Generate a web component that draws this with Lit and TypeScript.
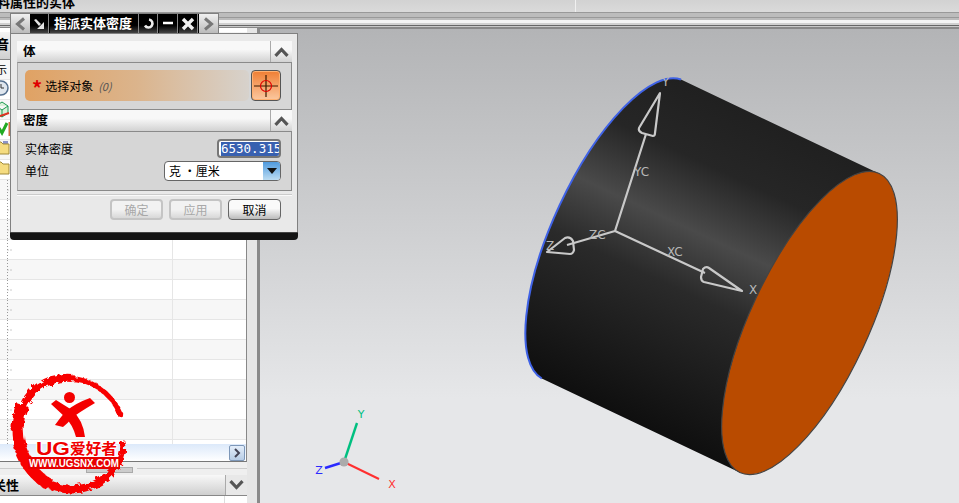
import { LitElement, html, css, svg } from "lit";
import { customElement } from "lit/decorators.js";

const chev = (up: boolean, c = "#555") => html`<svg width="15" height="10" viewBox="0 0 15 10"><path d=${up ? "M1.5 8.8 7.5 2.5l6 6.3" : "M1.5 1.2 7.5 7.5l6-6.3"} fill="none" stroke=${c} stroke-width="3.2"/></svg>`;

const folder = svg`<path d="M-4 2h5l2 2h6v10h-13z" fill="#f5dc80" stroke="#a08a3a"/>`;

@customElement("app-root")
export class AppRoot extends LitElement {
  static styles = css`
    :host { display: block; width: 959px; height: 503px; overflow: hidden; position: relative; background: #e4e4e4;
      font-family: "Noto Sans CJK SC", "Liberation Sans", sans-serif; font-size: 12px; color: #000; }
    * { box-sizing: border-box; }
    .app { display: flex; flex-direction: column; height: 503px; }
    .top { height: 12px; flex: none; display: flex; background: linear-gradient(#d2d2d2, #dadada); overflow: hidden; }
    .top .cell { width: 576px; border-right: 1px solid #f0f0f0; padding-left: 0; }
    .top b { display: block; margin: -7px 0 0 -3px; font-size: 13px; line-height: 18px; font-weight: 700; white-space: nowrap; }
    .ribbon { height: 16px; flex: none; background: linear-gradient(#999 0 1px, #bcbcbc 1px 5px, #999 5px 6px, #bbb 6px 8px, #f4f4f4 8px 11px, #d0d0d0 11px 13px, #666 13px 14px, #c8c8c8 14px 15px, #888 15px 16px); }
    .main { flex: 1; display: flex; min-height: 0; }
    .left { width: 247px; flex: none; display: flex; flex-direction: column; background: #fff; }
    .phead { height: 28px; flex: none; margin-top: 4px; background: linear-gradient(#f4f4f4, #d0d0d0); border-bottom: 1px solid #888; padding-top: 3px; }
    .phead b { display: block; margin-left: -4px; font-size: 13px; line-height: 17px; }
    .tree { height: 384px; flex: none; display: flex; flex-direction: column; overflow: hidden; border-right: 1px solid #888; }
    .row { height: 20px; flex: none; display: flex; border-bottom: 1px solid #e6e6e6; background: #fff; }
    .row.alt { background: #f7f7f7; }
    .row .a { width: 173px; border-right: 1px solid #e6e6e6; overflow: hidden; }
    .row svg { display: block; }
    .row .t { font-size: 11px; line-height: 19px; margin-left: -4px; }
    .hscroll { height: 18px; flex: none; display: flex; border-right: 1px solid #888; border-bottom: 1px solid #777;
      background: linear-gradient(#dce9fa, #fff); padding: 1px 1px 0 0; justify-content: flex-end; }
    .sbtn { width: 16px; height: 16px; border: 1px solid #7d97b8; border-radius: 2px; background: linear-gradient(#e4eefa, #b8cde6); display: flex; align-items: center; justify-content: center; }
    .sash { height: 13px; flex: none; display: flex; align-items: center; background: #efefef; }
    .sash i { display: block; height: 1px; flex: 1; background: #ccc; }
    .sash u { display: block; width: 47px; height: 6px; margin: 3px 4px 0 4px; background: #ccc; border: 1px solid #aaa; }
    .sash .l { flex: none; width: 82px; }
    .phead2 { height: 21px; flex: none; display: flex; background: linear-gradient(#f8f8f8, #cfcfcf); border-bottom: 1px solid #888; }
    .phead2 span { flex: 1; overflow: hidden; }
    .phead2 b { display: block; margin-left: -7px; font-size: 13px; line-height: 20px; }
    .phead2 div { width: 22px; border-left: 1px solid #aaa; display: flex; align-items: center; justify-content: center; background: #e8e8e8; }
    .rest2 { flex: 1; display: flex; justify-content: flex-end; background: #fff; }
    .rest2 i { display: block; width: 1px; margin-right: 22px; background: #ddd; }
    .gap { width: 10px; flex: none; background: #e6e6e6; }
    .bar { width: 3px; flex: none; background: #8a8a8a; }
    .view { flex: 1; min-width: 0; background: linear-gradient(#b3b4b6 0%, #e6e7e9 78%); border-top: 1px solid #888; }
    .view svg { display: block; }
    .view text { font-family: "DejaVu Sans", sans-serif; }

    .dlg { position: absolute; left: 10px; top: 13px; width: 288px; display: flex; flex-direction: column; }
    .strip { width: 209px; height: 20px; display: flex; background: #000; border: 1px solid #808080; border-bottom: none; }
    .strip .nav { width: 19px; flex: none; background: linear-gradient(#f0f0f0, #bbb); display: flex; align-items: center; justify-content: center; }
    .strip .ic { width: 19px; flex: none; margin-right: 1px; background: linear-gradient(#000 60%, #444); border-right: 1px solid #888; display: flex; align-items: center; justify-content: center; }
    .strip .title { flex: 1; background: linear-gradient(#000 60%, #444); border-right: 1px solid #888; color: #fff; font-weight: 700; font-size: 13px; line-height: 18px; padding-left: 4px; white-space: nowrap; overflow: hidden; }
    .body { height: 199px; background: #e9e9e9; border: 1px solid #808080; border-bottom: none; padding: 7px 5px 0 6px; display: flex; flex-direction: column; }
    .sec { height: 21px; flex: none; display: flex; background: linear-gradient(#f8f8f8 40%, #d2d2d2); }
    .sec b { flex: 1; font-size: 12.5px; line-height: 20px; padding-left: 6px; }
    .sec div { width: 22px; border-left: 1px solid #aaa; display: flex; align-items: center; justify-content: center; }
    .grp { background: #d6d6d6; border: 1px solid #8a8a8a; border-left-color: #aaa; }
    .g1 { height: 48px; padding: 7px 10px 0 7px; display: flex; gap: 2px; }
    .sel { width: 226px; height: 31px; border-radius: 5px; background: linear-gradient(90deg, #e0a264, #dbb48c 50%, #d7d2cc); display: flex; align-items: center; gap: 3px; padding-left: 7px; font-size: 12px; }
    .sel s { color: #e00000; text-decoration: none; font-size: 20px; font-weight: 700; line-height: 22px; height: 18px; }
    .sel em { color: #555; margin-left: 2px; font-size: 11px; }
    .cross { width: 30px; height: 31px; border: 1px solid #555; border-radius: 4px; background: linear-gradient(#ef7e33, #fbc8a0); display: flex; align-items: center; justify-content: center; box-shadow: inset 0 0 0 1px #ffb070; }
    .g2 { height: 60px; padding: 7px 10px 0 7px; display: flex; flex-direction: column; gap: 3px; }
    .frow { display: flex; justify-content: space-between; align-items: center; height: 19px; }
    .num { width: 64px; height: 19px; border: 2px solid #777; border-radius: 4px; background: #fff; padding: 1px 0 0 2px; overflow: hidden; }
    .num span { display: block; background: #3860b0; color: #fff; font: 12.5px/14px "DejaVu Sans Mono", "Liberation Mono", monospace; white-space: nowrap; width: 60px; overflow: hidden; }
    .pick { width: 117px; height: 20px; border: 1px solid #666; border-radius: 4px; background: #fff; display: flex; line-height: 18px; padding-left: 4px; overflow: hidden; }
    .pick span { flex: 1; }
    .pick div { width: 17px; background: linear-gradient(#4f9ade, #bcdcf2); display: flex; align-items: center; justify-content: center; }
    .sep { height: 2px; flex: none; margin-top: 3px; background: #fafafa; border-top: 1px solid #ccc; }
    .btns { display: flex; justify-content: flex-end; gap: 6px; padding: 3px 11px 0 0; }
    .btn { width: 53px; height: 21px; border: 2px solid #c4c4c4; border-radius: 4px; background: linear-gradient(#f2f2f2 50%, #d8d8d8); color: #a8a8a8; text-align: center; line-height: 17px; }
    .btn.on { border-color: #666; border-width: 1px; color: #000; line-height: 19px; background: linear-gradient(#fafafa 45%, #bbb); }
    .foot { height: 8px; background: #141414; border-radius: 0 0 4px 4px; border-top: 1px solid #444; }

    .mark { position: absolute; left: 0; top: 370px; pointer-events: none; display: block; }
    .mark .u { font: 700 18px "Liberation Sans", sans-serif; }
    .mark .c { font: 700 15px "Noto Sans CJK SC", sans-serif; }
    .mark .w { font: 700 10.5px "Liberation Sans", sans-serif; }
  `;

  private rowIcon(i: number) {
    if (i === 0) return html`<div class="t">示</div>`;
    if (i === 1) return html`<svg width="12" height="19" viewBox="0 0 12 19"><circle cx="1" cy="8" r="7" fill="#dfe6ee" stroke="#55708f" stroke-width="1.5"/><path d="M1 4v4h3" fill="none" stroke="#333"/></svg>`;
    if (i === 2) return html`<svg width="12" height="19" viewBox="0 0 12 19"><path d="M-4 6 2 2l6 4v7l-6 4-6-4zM-4 6l6 4 6-4M2 10v7" fill="#d8f0d8" stroke="#1a9a50"/><path d="M-3 17 9 13" stroke="#e03020" stroke-width="2"/></svg>`;
    if (i === 3) return html`<svg width="12" height="19" viewBox="0 0 12 19"><path d="M-1 8 2 13 7 3" fill="none" stroke="#22aa22" stroke-width="3"/><path d="M9.5 2v14" stroke="#d07040" stroke-width="2"/></svg>`;
    if (i === 4) return html`<svg width="12" height="19" viewBox="0 0 12 19"><path d="M3 2h5M3 4h5" stroke="#223399"/>${folder}</svg>`;
    if (i === 5) return html`<svg width="12" height="19" viewBox="0 0 12 19">${folder}</svg>`;
    return html`<svg width="12" height="19" viewBox="0 0 12 19"><path d="M7.5 0v19M7.5 10H12" stroke="#999" stroke-dasharray="1 2"/></svg>`;
  }

  render() {
    const rows = Array.from({ length: 20 }, (_, i) => i);
    return html`
      <div class="app">
        <div class="top"><div class="cell"><b>料属性的实体</b></div></div>
        <div class="ribbon"></div>
        <div class="main">
          <div class="left">
            <div class="phead"><b>音</b></div>
            <div class="tree">
              ${rows.map((i) => html`<div class="row ${i % 2 ? "" : "alt"}"><div class="a">${this.rowIcon(i)}</div></div>`)}
            </div>
            <div class="hscroll"><div class="sbtn"><svg width="8" height="10" viewBox="0 0 8 10"><path d="M2 1l4 4-4 4" fill="none" stroke="#445" stroke-width="2"/></svg></div></div>
            <div class="sash"><i class="l"></i><u></u><i></i></div>
            <div class="phead2"><span><b>关性</b></span><div>${chev(false)}</div></div>
            <div class="rest2"><i></i></div>
          </div>
          <div class="gap"></div>
          <div class="bar"></div>
          <div class="view">${this.scene()}</div>
        </div>
      </div>

      <div class="dlg">
        <div class="strip">
          <div class="nav"><svg width="11" height="14" viewBox="0 0 11 14"><path d="M9 1.5 2.5 7 9 12.5" fill="none" stroke="#777" stroke-width="3"/></svg></div>
          <div class="ic"><svg width="12" height="12" viewBox="0 0 12 12"><path d="M1 2 3 1 8 6 6 8ZM11 4V11H4Z" fill="#e4e4e4"/></svg></div>
          <div class="title">指派实体密度</div>
          <div class="ic"><svg width="13" height="13" viewBox="0 0 13 13"><path d="M7 2.5a4 4 0 1 1-4 6" fill="none" stroke="#eee" stroke-width="2.6"/></svg></div>
          <div class="ic"><svg width="12" height="12" viewBox="0 0 12 12"><path d="M1 5h10" stroke="#fff" stroke-width="2.5"/></svg></div>
          <div class="ic"><svg width="14" height="14" viewBox="0 0 14 14"><path d="M2 2l10 10M12 2 2 12" stroke="#f0f0f0" stroke-width="3.4"/></svg></div>
          <div class="nav"><svg width="11" height="14" viewBox="0 0 11 14"><path d="M2 1.5 8.5 7 2 12.5" fill="none" stroke="#777" stroke-width="3"/></svg></div>
        </div>
        <div class="body">
          <div class="sec"><b>体</b><div>${chev(true)}</div></div>
          <div class="grp g1">
            <div class="sel"><s>*</s><span>选择对象</span><em>(0)</em></div>
            <div class="cross"><svg width="26" height="26" viewBox="0 0 26 26"><path d="M1 13h24M13 2v22" stroke="#3a1a00" stroke-width="1.2"/><circle cx="13" cy="13" r="5.5" fill="none" stroke="#e00000" stroke-width="1.2"/></svg></div>
          </div>
          <div class="sec"><b>密度</b><div>${chev(true)}</div></div>
          <div class="grp g2">
            <div class="frow"><span>实体密度</span><div class="num"><span>6530.315</span></div></div>
            <div class="frow"><span>单位</span><div class="pick"><span>克 ·厘米</span><div><svg width="12" height="8" viewBox="0 0 12 8"><path d="M1 1h10L6 7z" fill="#111"/></svg></div></div></div>
          </div>
          <div class="sep"></div>
          <div class="btns"><div class="btn">确定</div><div class="btn">应用</div><div class="btn on">取消</div></div>
        </div>
        <div class="foot"></div>
      </div>
      ${this.mark()}
    `;
  }

  private scene() {
    const ink = "#c9c9c9";
    return html`<svg width="699" height="475" viewBox="260 28 699 475">
      <defs>
        <linearGradient id="cyl" gradientUnits="userSpaceOnUse" x1="681" y1="78.5" x2="541.8" y2="377.5">
          <stop offset="0" stop-color="#202020"/><stop offset=".2" stop-color="#262626"/>
          <stop offset=".4" stop-color="#4a4a4a"/><stop offset=".58" stop-color="#2a2a2a"/>
          <stop offset="1" stop-color="#0f0f0f"/>
        </linearGradient>
      </defs>
      <path d="M681 78.5 879 172.5 739.8 471.5 541.8 377.5A165 59 -65 0 1 681 78.5Z" fill="url(#cyl)"/>
      <path d="M681 78.5A165 59 -65 0 0 541.8 377.5" fill="none" stroke="#3f62e6" stroke-width="2"/>
      <ellipse cx="809.5" cy="322" rx="165" ry="59" transform="rotate(-65 809.5 322)" fill="#b94b00" stroke="#444" stroke-width="1.2"/>

      <g fill="none" stroke=${ink} stroke-width="2.2" stroke-linejoin="round">
        <path d="M615 230 646 133M615 230 705 272M615 230 567 244"/>
        <path d="M660 92 639 127Q638 130 642 132L653 135Q655 135 655 132Z"/>
        <path d="M742 290 704 281Q701 280 701 276L703 268Q706 265 709 267Z"/>
        <path d="M547 251 565 237Q570 235 573 240L574 249Q573 253 570 253Z"/>
      </g>
      <g fill="#b8b8b8" font-size="12">
        <text x="662" y="85">Y</text>
        <text x="634" y="175">YC</text>
        <text x="589" y="238">ZC</text>
        <text x="667" y="255">XC</text>
        <text x="749" y="293">X</text>
        <text x="546" y="249">Z</text>
      </g>

      <path d="M344 461 357 422" stroke="#00c080" stroke-width="2.4"/>
      <path d="M344 461 379 478" stroke="#ff3030" stroke-width="2"/>
      <path d="M344 461 325 467" stroke="#2a2aff" stroke-width="2.4"/>
      <circle cx="344" cy="461" r="4.6" fill="#ababab"/>
      <g font-size="11" text-anchor="middle">
        <text x="361" y="417" fill="#00c080">Y</text>
        <text x="392" y="487" fill="#ff3030">X</text>
        <text x="319" y="473" fill="#2a2aff">Z</text>
      </g>
    </svg>`;
  }

  private mark() {
    return html`<svg class="mark" width="135" height="133" viewBox="0 370 135 133">
      <defs>
        <filter id="rough" x="-10%" y="-10%" width="120%" height="120%">
          <feTurbulence type="fractalNoise" baseFrequency="0.2" numOctaves="2" seed="4"/>
          <feDisplacementMap in="SourceGraphic" scale="7"/>
        </filter>
      </defs>
      <g fill="none" stroke="#f80000" filter="url(#rough)">
        <path d="M72 378C45 376 26 392 20 415" stroke-width="8"/>
        <path d="M22 405C11 435 21 468 50 485" stroke-width="12"/>
        <path d="M40 478C60 497 100 493 119 462" stroke-width="8"/>
        <path d="M60 379C88 375 112 392 121 416" stroke-width="5"/>
        <path d="M122 441C124 448 122 456 118 464" stroke-width="5"/>
      </g>
      <g fill="#f40000">
        <circle cx="69.5" cy="397.5" r="5.5"/>
        <path d="M51 404 56 400 72 410Q83 420 85 437L76 437Q73 425 65 417Z"/>
        <path d="M90 398 95 403Q78 413 72 418 68 423 63 427L55 425Q60 418 66 411 76 403 90 398Z"/>
      </g>
      <text class="u" x="36" y="455" fill="#f00000" stroke="#fff" stroke-width="2" paint-order="stroke" textLength="34" lengthAdjust="spacingAndGlyphs">UG</text>
      <text class="c" x="70" y="454" fill="#f00000" stroke="#fff" stroke-width="2" paint-order="stroke" textLength="47" lengthAdjust="spacingAndGlyphs">爱好者</text>
      <rect x="28" y="457" width="92" height="12" fill="#e80000"/>
      <text class="w" x="29" y="467" fill="#fff" textLength="90" lengthAdjust="spacingAndGlyphs">WWW.UGSNX.COM</text>
    </svg>`;
  }
}
